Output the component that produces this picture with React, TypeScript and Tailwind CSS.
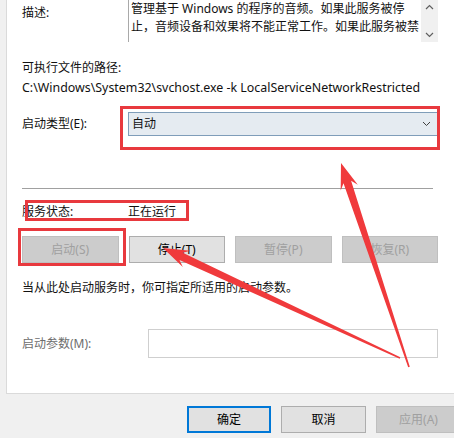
import React from 'react';

type Pt = [number, number];

// tapered annotation arrow: tip -> tail, fat head, thin tail
function arrowPoints(tip: Pt, tail: Pt, head = 26, headW = 9, shaftW = 4, tailW = 0.8) {
  const dx = tail[0] - tip[0];
  const dy = tail[1] - tip[1];
  const len = Math.hypot(dx, dy);
  const ux = dx / len;
  const uy = dy / len;
  const nx = -uy;
  const ny = ux;
  const hx = tip[0] + ux * head;
  const hy = tip[1] + uy * head;
  const nx2 = tip[0] + ux * (head - 6);
  const ny2 = tip[1] + uy * (head - 6);
  const pts: Pt[] = [
    tip,
    [hx + nx * headW, hy + ny * headW],
    [nx2 + nx * shaftW, ny2 + ny * shaftW],
    [tail[0] + nx * tailW, tail[1] + ny * tailW],
    [tail[0] - nx * tailW, tail[1] - ny * tailW],
    [nx2 - nx * shaftW, ny2 - ny * shaftW],
    [hx - nx * headW, hy - ny * headW],
  ];
  return pts.map((p) => `${p[0].toFixed(1)},${p[1].toFixed(1)}`).join(' ');
}

function Btn({ label, disabled, primary, className = '' }: { label: string; disabled?: boolean; primary?: boolean; className?: string }) {
  const base = 'h-[27px] flex items-center justify-center text-[12px] shrink-0';
  const look = disabled
    ? 'bg-[#cccccc] border border-[#bfbfbf] text-[#a0a0a0]'
    : primary
      ? 'bg-[#e1e1e1] border-2 border-[#0078d7] text-black'
      : 'bg-[#e1e1e1] border border-[#adadad] text-black';
  return <div className={`${base} ${look} ${className}`}>{label}</div>;
}

export default function App() {
  return (
    <div
      className="relative w-[454px] h-[438px] overflow-hidden bg-[#f0f0f0] text-[12px] text-[#111]"
      style={{ fontFamily: '"Noto Sans", "Noto Sans CJK SC", sans-serif' }}
    >
      {/* property page */}
      <div className="ml-[6px] h-[394px] bg-white border-l border-b border-[#dadada] pl-[15px]">
        <div className="flex h-[42px]">
          <div className="w-[106px] pt-[4px] leading-[18px]">描述:</div>
          <div className="w-[310px] flex border-l border-[#a9a9a9]">
            <div className="flex-1 pl-[2px] leading-[18px] whitespace-nowrap overflow-hidden">
              <div>管理基于 Windows 的程序的音频。如果此服务被停</div>
              <div>止，音频设备和效果将不能正常工作。如果此服务被禁</div>
            </div>
            <div className="w-[17px] bg-[#f0f0f0] flex flex-col items-center justify-between py-[4px]">
              <svg width="9" height="6" viewBox="0 0 9 6" fill="none" stroke="#606060" strokeWidth="1.2">
                <polyline points="1,5 4.5,1.5 8,5" />
              </svg>
              <svg width="9" height="6" viewBox="0 0 9 6" fill="none" stroke="#606060" strokeWidth="1.2">
                <polyline points="1,1 4.5,4.5 8,1" />
              </svg>
            </div>
          </div>
        </div>

        <div className="mt-[16px] leading-[20px]">可执行文件的路径:</div>
        <div className="leading-[20px] whitespace-nowrap text-[12.4px]">C:\Windows\System32\svchost.exe -k LocalServiceNetworkRestricted</div>

        <div className="mt-[14px] flex items-center h-[24px]">
          <div className="w-[106px]">启动类型(E):</div>
          <div className="w-[310px] h-[24px] flex items-center justify-between bg-[#e5ebf1] border border-[#7f9db9] pl-[3px] pr-[6px]">
            <span>自动</span>
            <svg width="9" height="6" viewBox="0 0 9 6" fill="none" stroke="#404040" strokeWidth="1">
              <polyline points="1,1 4.5,4.5 8,1" />
            </svg>
          </div>
        </div>

        <div className="mt-[52px] w-[411px] h-px bg-[#a0a0a0]" />

        <div className="mt-[14px] flex leading-[18px]">
          <div className="w-[106px]">服务状态:</div>
          <div>正在运行</div>
        </div>

        <div className="mt-[15px] w-[416px] grid grid-cols-4 gap-[10px]">
          <Btn label="启动(S)" disabled />
          <Btn label="停止(T)" />
          <Btn label="暂停(P)" disabled />
          <Btn label="恢复(R)" disabled />
        </div>

        <div className="mt-[16px] leading-[18px]">当从此处启动服务时，你可指定所适用的启动参数。</div>

        <div className="mt-[32px] flex items-center">
          <div className="w-[126px] text-[#6d6d6d]">启动参数(M):</div>
          <div className="w-[290px] h-[29px] border border-[#cfcfcf] bg-white" />
        </div>
      </div>

      <div className="mt-[12px] flex gap-[10px] pl-[187px]">
        <Btn label="确定" primary className="w-[84px] h-[26px]" />
        <Btn label="取消" className="w-[85px] h-[26px]" />
        <Btn label="应用(A)" disabled className="w-[85px] h-[26px]" />
      </div>

      {/* red annotation boxes */}
      <div className="absolute left-[120px] top-[106px] w-[320px] h-[44px] border-[3px] border-[#e8393e] pointer-events-none" />
      <div className="absolute left-[25px] top-[200px] w-[164px] h-[21px] border-[3px] border-[#e8393e] pointer-events-none" />
      <div className="absolute left-[18px] top-[228px] w-[108px] h-[38px] border-[3px] border-[#e8393e] pointer-events-none" />

      {/* red arrows */}
      <svg className="absolute inset-0 pointer-events-none" width="454" height="438" viewBox="0 0 454 438">
        <polygon points={arrowPoints([341, 163], [409, 367])} fill="#f03a3c" />
        <polygon points={arrowPoints([163, 248], [400, 358])} fill="#f03a3c" />
      </svg>
    </div>
  );
}
